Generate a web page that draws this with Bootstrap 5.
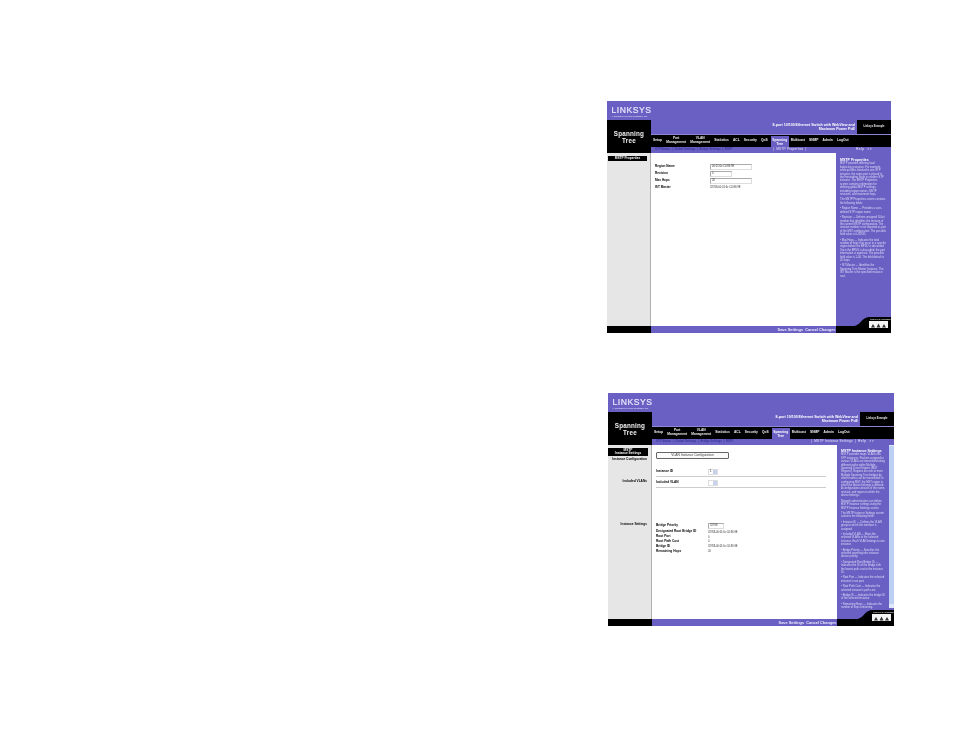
<!DOCTYPE html>
<html lang="en"><head><meta charset="utf-8"><title>Spanning Tree</title>
<link href="https://cdn.jsdelivr.net/npm/bootstrap@5.3.0/dist/css/bootstrap.min.css" rel="stylesheet">
<style>
html,body{background:#fff;margin:0;height:738px;overflow:hidden}
body{font-family:"Liberation Sans",Arial,sans-serif;font-size:3.2px;line-height:1.2;color:#000}
.sheet{height:232px;width:284px;margin:101px 0 0 607px;background:#000;filter:blur(.28px)}
.sheet.two{width:286px;height:233px;margin:60px 0 0 608px}
.toprow{height:19px;background:#6a60c4;padding:5px 0 0 4.5px;color:#e9e7fa;flex:none}
.logo{font-size:8.6px;letter-spacing:.55px;line-height:8px;white-space:nowrap;-webkit-text-stroke:.2px #e9e7fa}
.logotag{font-size:2.3px;line-height:2.5px;white-space:nowrap;margin-top:.6px;font-weight:700;color:#d8d5f5}
.midrow{height:33px;flex:none;background:#000}
.title{width:44px;flex:none;color:#f2f2f2;font-size:6.3px;letter-spacing:.2px;font-weight:700;text-align:center;line-height:7.2px;padding-top:10px}
.headmain{min-width:0}
.headtop{height:14px}
.prodname{background:#6a60c4;color:#fff;font-weight:700;font-size:3.6px;line-height:4.4px;text-align:right;padding:2.5px 2px 0 0;white-space:nowrap}
.account{width:34px;flex:none;color:#e8e8e8;text-align:center;padding-top:5px;font-weight:700;font-size:2.6px}
.navline{height:13px;color:#f2f2f2;font-weight:700;font-size:3.25px;line-height:3.7px;text-align:center;padding-left:2px;gap:4.2px;border-top:1px solid #8d86d6}
.navcur{background:#6a60c4;height:15px;padding:3px 0 0;align-self:flex-start;margin:1px -2.2px 0 -1px;width:18px;color:#fff}
.subline{height:6px;background:#6a60c4;color:#3d359c;font-size:2.9px;font-weight:700;line-height:5px;padding-left:4px;white-space:nowrap;position:relative}
.subcur{color:#e6e4f8;position:absolute;left:122px;font-size:3.2px;font-weight:400;letter-spacing:.2px}
.subhelp{color:#f2f1fb;position:absolute;left:205px;font-size:3.2px;font-weight:400;letter-spacing:.5px}
.two .subcur{left:159px}
.two .subhelp{left:206px}
.leftcol{width:44px;flex:none;background:#e6e6e6;border-right:1px solid #b0b0b0;padding-top:2.5px}
.lefthead{background:#000;color:#fff;font-weight:700;margin:0 3px 0 1px;text-align:center;padding:1px 0;line-height:3px}
.two .leftcol{padding-top:3px}
.two .lefthead{margin:0 3px 1.500px 0;line-height:3.2px}
.leftlab{font-weight:700;text-align:right;padding-right:4px;white-space:nowrap}
.lab-vlan{margin-top:18px}
.lab-inst{margin-top:39px}
.maincol{background:#fff;min-width:0;padding:0 0 0 4px}
.helpcol{width:55px;flex:none;background:#6a60c4;color:#dedbf6;padding:5px 5px 0 4px;line-height:3.4px;font-size:2.7px;overflow:hidden}
.helpcol h6{font-size:3.6px;font-weight:700;line-height:4.4px;margin:0;color:#fff;white-space:nowrap}
.helpcol p{margin:0 0 2px}
.scrollwrap{width:57px;flex:none;background:#6a60c4}
.scrollwrap .helpcol{width:51px;padding:4px 3px 0 4px;height:165px}
.scrollbar{width:5px;background:#bcd0f4;border-top:3px solid #dfe8fb;border-bottom:4px solid #dfe8fb;height:165px;margin:-2px 0 0 1px}
.footrow{height:7px;flex:none;position:relative}
.footleft{width:44px;background:#000}
.footmain{background:#6a60c4;color:#eceafa;font-weight:700;text-align:right;font-size:3.9px;line-height:7px;padding-right:.5px;white-space:nowrap}
.footright{width:55px;background:#000;position:relative}
.two .footright{width:57px}
.ciscoshape{position:absolute;right:0;bottom:0;width:55px;height:17px}
.frm{display:grid;grid-template-columns:55px auto;grid-auto-rows:7.1px;align-items:center;justify-items:start;font-weight:700;padding-top:10px;font-size:3.1px}
.frm span{white-space:nowrap}
.frm .val{font-weight:400;font-size:2.7px;color:#333}
.fake{display:block;height:6px;border:1px solid #ddd;border-top-color:#aaa;border-left-color:#aaa;font-size:2.7px;font-weight:400;line-height:4px;padding-left:1px;background:#fff;color:#333}
.w-long{width:42px}
.w-short{width:22px}
.w-mid{width:16px}
.fsel{height:6px;width:10px;border:1px solid #ddd;font-size:2.7px;font-weight:400;line-height:4px;padding-left:1px}
.fsel i{display:block;width:4px;background:#c6d2f0}
.groupbtn{width:73px;height:7px;border:1px solid #666;border-radius:1px;text-align:center;line-height:5px;font-size:3.3px;margin:0 0 9.500px;background:#fafafa;color:#444}
.rule{border-top:1px solid #ccc;width:170px;margin:1.500px 0 2.500px}
.rowline{height:6px;font-weight:700}
.rowline b{width:52px;flex:none}
.two .maincol{padding-top:7px}
.settings{margin-top:34.500px;font-weight:700;font-size:3.2px}
.settings .rw{height:4.8px}
.settings .rw b{width:52px;flex:none}
.settings .rw em{font-style:normal;font-weight:400;font-size:2.6px;color:#333}
.settings .rw.tall{height:7.500px}
</style></head><body>

<section class="sheet d-flex flex-column">
<div class="toprow"><div class="logo">LINKSYS</div><div class="logotag">A Division of Cisco Systems, Inc.</div></div>
<div class="midrow d-flex"><div class="title">Spanning<br>Tree</div>
<div class="headmain flex-grow-1 d-flex flex-column"><div class="headtop d-flex"><div class="prodname flex-grow-1">8-port 10/100 Ethernet Switch with WebView and<br>Maximum Power PoE</div><div class="account">Linksys Example</div></div>
<div class="navline d-flex align-items-center"><span>Setup</span><span>Port<br>Management</span><span>VLAN<br>Management</span><span>Statistics</span><span>ACL</span><span>Security</span><span>QoS</span><span class="navcur">Spanning<br>Tree</span><span>Multicast</span><span>SNMP</span><span>Admin</span><span>LogOut</span></div>
<div class="subline"><span>STP Status &nbsp;|&nbsp; Global Settings &nbsp;|&nbsp; Bridge Settings &nbsp;|&nbsp; RSTP</span><span class="subcur">| &nbsp;MSTP Properties &nbsp;|</span><span class="subhelp">Help &nbsp;&gt;&gt;</span></div>
</div></div>
<div class="d-flex flex-grow-1">
<div class="leftcol"><div class="lefthead">MSTP Properties</div></div>
<div class="maincol flex-grow-1"><div class="frm">
<span>Region Name</span><span class="fake w-long">00:01:6c:C0:86:9E</span>
<span>Revision</span><span class="fake w-short">0</span>
<span>Max Hops</span><span class="fake w-long">20</span>
<span>IST Master</span><span class="val">32768-00:01:6c:C0:86:9E</span>
</div></div>
<div class="helpcol"><h6>MSTP Properties</h6>
<p>MSTP provides differing load balancing scenarios. For example, while port A is blocked in one STP instance, the same port is placed in the Forwarding State in another STP instance. The MSTP Properties screen contains information for defining global MSTP settings, including region names, MSTP revisions, and maximum hops.</p>
<p>The MSTP Properties screen contains the following fields:</p>
<p>&#8226; Region Name &#8212; Provides a user-defined STP region name.</p>
<p>&#8226; Revision &#8212; Defines unsigned 16-bit number that identifies the revision of the current MSTP configuration. The revision number is not required as part of the MST configuration. The possible field value is 0-65535.</p>
<p>&#8226; Max Hops &#8212; Indicates the total number of hops that occur in a specific region before the BPDU is discarded. Once the BPDU is discarded, the port information is aged out. The possible field value is 1-40. The field default is 20 hops.</p>
<p>&#8226; IST Master &#8212; Identifies the Spanning Tree Master Instance. The IST Master is the specified instance root.</p>
</div></div>
<div class="footrow d-flex"><div class="footleft"></div><div class="footmain flex-grow-1">Save Settings &nbsp;Cancel Changes</div><div class="footright"><svg class="ciscoshape" viewBox="0 0 55 17"><path fill="#000" d="M0 10H18C24 10 26 1 33 1H55V17H0Z"/><text x="34" y="4" font-size="2.500" font-weight="700" fill="#ddd" font-family="Liberation Sans">CISCO SYSTEMS</text><rect x="33" y="5" width="19" height="7" fill="#f4f4f4"/><path fill="#333" d="M35 11.500L37 8L39 11.500ZM40.500 11.500L42.500 7.500L44.500 11.500ZM46 11.500L48 8L50 11.500Z"/></svg></div></div>
</section>

<section class="sheet two d-flex flex-column">
<div class="toprow"><div class="logo">LINKSYS</div><div class="logotag">A Division of Cisco Systems, Inc.</div></div>
<div class="midrow d-flex"><div class="title">Spanning<br>Tree</div>
<div class="headmain flex-grow-1 d-flex flex-column"><div class="headtop d-flex"><div class="prodname flex-grow-1">8-port 10/100 Ethernet Switch with WebView and<br>Maximum Power PoE</div><div class="account">Linksys Example</div></div>
<div class="navline d-flex align-items-center"><span>Setup</span><span>Port<br>Management</span><span>VLAN<br>Management</span><span>Statistics</span><span>ACL</span><span>Security</span><span>QoS</span><span class="navcur">Spanning<br>Tree</span><span>Multicast</span><span>SNMP</span><span>Admin</span><span>LogOut</span></div>
<div class="subline"><span>STP Status &nbsp;|&nbsp; Global Settings &nbsp;|&nbsp; Bridge Settings &nbsp;|&nbsp; RSTP</span><span class="subcur">| &nbsp;MSTP Instance Settings &nbsp;|</span><span class="subhelp">Help &nbsp;&gt;&gt;</span></div>
</div></div>
<div class="d-flex flex-grow-1">
<div class="leftcol"><div class="lefthead">MSTP<br>Instance Settings</div><div class="leftlab">Instance Configuration</div>
<div class="leftlab lab-vlan">Included VLANs</div><div class="leftlab lab-inst">Instance Settings</div></div>
<div class="maincol flex-grow-1">
<div class="groupbtn">VLAN Instance Configuration</div>
<div class="rowline d-flex align-items-center"><b>Instance ID</b><span class="fsel d-flex justify-content-between">1<i></i></span></div><div class="rule"></div>
<div class="rowline d-flex align-items-center"><b>Included VLAN</b><span class="fsel d-flex justify-content-end"><i></i></span></div><div class="rule"></div>
<div class="settings">
<div class="rw tall d-flex align-items-center"><b>Bridge Priority</b><span class="fake w-mid">32768</span></div>
<div class="rw d-flex align-items-center"><b>Designated Root Bridge ID</b><em>32768-00:01:6c:C0:86:9E</em></div>
<div class="rw d-flex align-items-center"><b>Root Port</b><em>0</em></div>
<div class="rw d-flex align-items-center"><b>Root Path Cost</b><em>0</em></div>
<div class="rw d-flex align-items-center"><b>Bridge ID</b><em>32768-00:01:6c:C0:86:9E</em></div>
<div class="rw d-flex align-items-center"><b>Remaining Hops</b><em>20</em></div>
</div></div>
<div class="scrollwrap d-flex"><div class="helpcol"><h6>MSTP Instance Settings</h6>
<p>MSTP provides maps VLANs into STP instances. Packets assigned to various VLANs are transmitted along different paths within Multiple Spanning Trees Regions (MST Regions). Regions are one or more Multiple Spanning Tree bridges by which frames can be transmitted. In configuring MST, the MST region to which the device belongs is defined. A configuration consists of the name, revision, and region to which the device belongs.</p>
<p>Network administrators can define MSTP Instance settings using the MSTP Instance Settings screen.</p>
<p>The MSTP Instance Settings screen contains the following fields:</p>
<p>&#8226; Instance ID &#8212; Defines the VLAN group to which the interface is assigned.</p>
<p>&#8226; Included VLAN &#8212; Maps the selected VLANs to the selected instance. Each VLAN belongs to one instance.</p>
<p>&#8226; Bridge Priority &#8212; Specifies the selected spanning tree instance device priority.</p>
<p>&#8226; Designated Root Bridge ID &#8212; Indicates the ID of the bridge with the lowest path cost to the instance ID.</p>
<p>&#8226; Root Port &#8212; Indicates the selected instance's root port.</p>
<p>&#8226; Root Path Cost &#8212; Indicates the selected instance's path cost.</p>
<p>&#8226; Bridge ID &#8212; Indicates the bridge ID of the selected instance.</p>
<p>&#8226; Remaining Hops &#8212; Indicates the number of hops remaining.</p>
</div><div class="scrollbar"></div></div></div>
<div class="footrow d-flex"><div class="footleft"></div><div class="footmain flex-grow-1">Save Settings &nbsp;Cancel Changes</div><div class="footright"><svg class="ciscoshape" viewBox="0 0 55 17"><path fill="#000" d="M0 10H18C24 10 26 1 33 1H55V17H0Z"/><text x="34" y="4" font-size="2.500" font-weight="700" fill="#ddd" font-family="Liberation Sans">CISCO SYSTEMS</text><rect x="33" y="5" width="19" height="7" fill="#f4f4f4"/><path fill="#333" d="M35 11.500L37 8L39 11.500ZM40.500 11.500L42.500 7.500L44.500 11.500ZM46 11.500L48 8L50 11.500Z"/></svg></div></div>
</section>
<script src="https://cdn.jsdelivr.net/npm/bootstrap@5.3.0/dist/js/bootstrap.bundle.min.js"></script>
</body></html>
